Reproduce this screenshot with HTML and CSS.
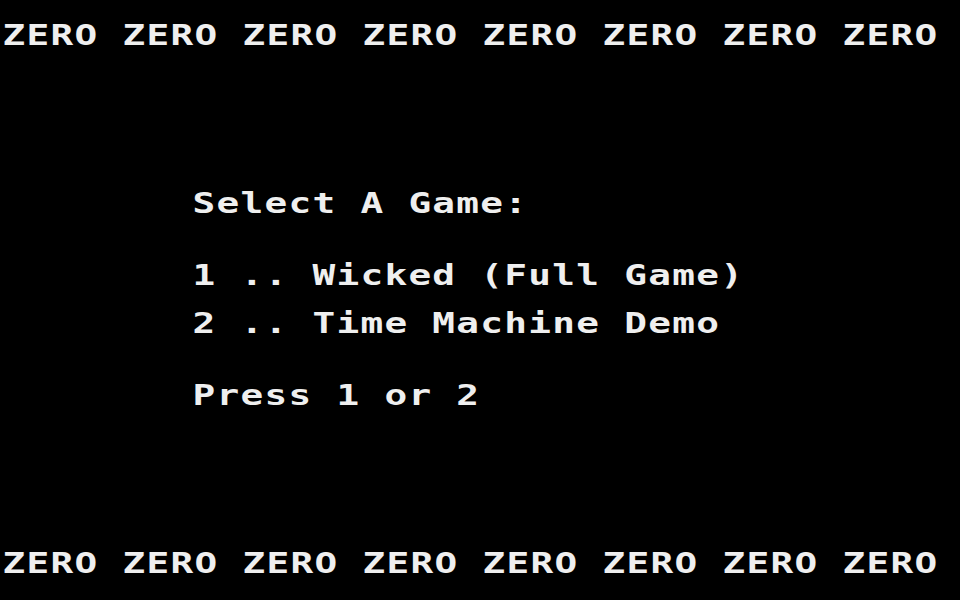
FILE: index.html
```html
<!DOCTYPE html>
<html lang="en">
<head>
<meta charset="utf-8">
<title>Select A Game</title>
<link rel="stylesheet" href="styles.css">
</head>
<body>
<main class="screen">
  <div class="line banner banner-top">ZERO ZERO ZERO ZERO ZERO ZERO ZERO ZERO</div>
  <div class="line menu title">Select A Game:</div>
  <div class="line menu opt1">1 .. Wicked (Full Game)</div>
  <div class="line menu opt2">2 .. Time Machine Demo</div>
  <div class="line menu prompt">Press 1 or 2</div>
  <div class="line banner banner-bottom">ZERO ZERO ZERO ZERO ZERO ZERO ZERO ZERO</div>
</main>
</body>
</html>
```

FILE: styles.css
```css
html, body {
  margin: 0;
  padding: 0;
  background: #000;
}

.screen {
  width: 960px;
  height: 600px;
  background: #000;
  display: grid;
  grid-template-rows: repeat(25, 24px);
  overflow: hidden;
}

.line {
  font-family: "DejaVu Sans Mono", monospace;
  font-weight: bold;
  font-size: 29px;
  line-height: 24px;
  letter-spacing: 1px;
  color: #efefef;
  white-space: pre;
  transform-origin: 0 0;
  transform: scale(1.3, 1) translateY(-1px);
}

.banner { padding-left: 2px; }
.menu { padding-left: 148px; }

.banner-top { grid-row: 2; }
.title { grid-row: 9; }
.opt1 { grid-row: 12; }
.opt2 { grid-row: 14; }
.prompt { grid-row: 17; }
.banner-bottom { grid-row: 24; }
```
